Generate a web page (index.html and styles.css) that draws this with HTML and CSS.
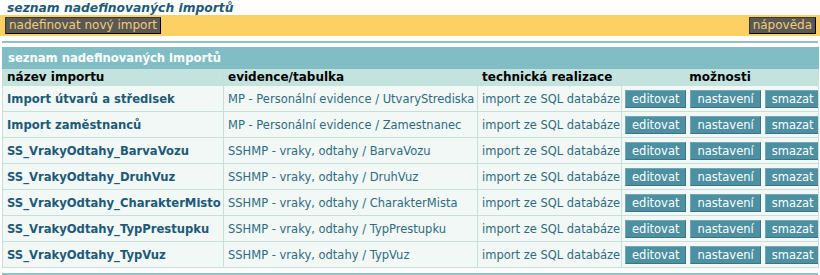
FILE: index.html
```html
<!DOCTYPE html>
<html lang="cs">
<head>
<meta charset="utf-8">
<title>seznam nadefinovaných importů</title>
<link rel="stylesheet" href="styles.css">
</head>
<body>
<div class="page-title">seznam nadefinovaných importů</div>
<div class="toolbar">
  <span class="tbtn">nadefinovat nový import</span>
  <span class="tbtn">nápověda</span>
</div>
<div class="sep"></div>
<table class="grid">
  <colgroup>
    <col class="c1"><col class="c2"><col class="c3"><col class="c4">
  </colgroup>
  <thead>
    <tr class="caption"><th colspan="4">seznam nadefinovaných importů</th></tr>
    <tr class="head">
      <th>název importu</th>
      <th>evidence/tabulka</th>
      <th>technická realizace</th>
      <th class="center">možnosti</th>
    </tr>
  </thead>
  <tbody>
    <tr><td class="name">Import útvarů a středisek</td><td>MP - Personální evidence / UtvaryStrediska</td><td>import ze SQL databáze</td><td class="acts"><span class="b">editovat</span><span class="b">nastavení</span><span class="b">smazat</span></td></tr>
    <tr><td class="name">Import zaměstnanců</td><td>MP - Personální evidence / Zamestnanec</td><td>import ze SQL databáze</td><td class="acts"><span class="b">editovat</span><span class="b">nastavení</span><span class="b">smazat</span></td></tr>
    <tr><td class="name">SS_VrakyOdtahy_BarvaVozu</td><td>SSHMP - vraky, odtahy / BarvaVozu</td><td>import ze SQL databáze</td><td class="acts"><span class="b">editovat</span><span class="b">nastavení</span><span class="b">smazat</span></td></tr>
    <tr><td class="name">SS_VrakyOdtahy_DruhVuz</td><td>SSHMP - vraky, odtahy / DruhVuz</td><td>import ze SQL databáze</td><td class="acts"><span class="b">editovat</span><span class="b">nastavení</span><span class="b">smazat</span></td></tr>
    <tr><td class="name">SS_VrakyOdtahy_CharakterMisto</td><td>SSHMP - vraky, odtahy / CharakterMista</td><td>import ze SQL databáze</td><td class="acts"><span class="b">editovat</span><span class="b">nastavení</span><span class="b">smazat</span></td></tr>
    <tr><td class="name">SS_VrakyOdtahy_TypPrestupku</td><td>SSHMP - vraky, odtahy / TypPrestupku</td><td>import ze SQL databáze</td><td class="acts"><span class="b">editovat</span><span class="b">nastavení</span><span class="b">smazat</span></td></tr>
    <tr><td class="name">SS_VrakyOdtahy_TypVuz</td><td>SSHMP - vraky, odtahy / TypVuz</td><td>import ze SQL databáze</td><td class="acts"><span class="b">editovat</span><span class="b">nastavení</span><span class="b">smazat</span></td></tr>
  </tbody>
</table>
<div class="sep bottom"></div>
</body>
</html>
```
FILE: styles.css
```css
html, body { margin: 0; padding: 0; background: #fff; }
body { font-family: "DejaVu Sans", Verdana, sans-serif; font-size: 11.5px; color: #333; }
.page-title { font-weight: bold; font-style: italic; color: #1d5a78; padding: 1px 0 0 7px; height: 14px; line-height: 14px; font-size: 12.3px; }
.toolbar { background: #fcd062; height: 21px; display: flex; justify-content: space-between; align-items: center; padding: 0 4px 0 5px; }
.tbtn { background: #5a5853; color: #f1cb7e; border: 1px solid #3a3a3a; border-right-color: #000; border-bottom-color: #000; height: 15px; line-height: 15px; padding: 0 3px; font-size: 12px; }
.sep { height: 2px; background: #8fc1c6; margin: 5px 2px 0; }
.sep.bottom { margin-top: 5px; }
.grid { margin: 4px 2px 0; width: 816px; border-collapse: collapse; table-layout: fixed; }
.c1 { width: 221px; }
.c2 { width: 254px; }
.c3 { width: 144px; }
.c4 { width: 197px; }
.grid th, .grid td { border: 1px solid #c9ddd9; text-align: left; white-space: nowrap; overflow: hidden; }
.caption th { background: #80bdc4; color: #fff; height: 20px; padding: 0 0 0 5px; border-color: #80bdc4; font-size: 11.6px; }
.head th { background: #c2e3de; color: #000; height: 16px; padding: 0 4px; line-height: 16px; font-size: 12px; }
.head th.center { text-align: center; }
.grid td { background: #f1f8f6; height: 25px; padding: 0 4px; color: #2f6b80; }
.grid td.name { font-weight: bold; color: #1d5a78; font-size: 11.6px; }
.grid td.acts { font-size: 0; padding: 0 2px 0 3px; }
.b { display: inline-block; background: #4c90a2; color: #fff; font-size: 11.5px; height: 16px; line-height: 16px; padding: 0 6px; border: 1px solid #6fa9b7; border-right-color: #3d7384; border-bottom-color: #3d7384; margin-right: 4px; }
.b:last-child { margin-right: 0; }
```
